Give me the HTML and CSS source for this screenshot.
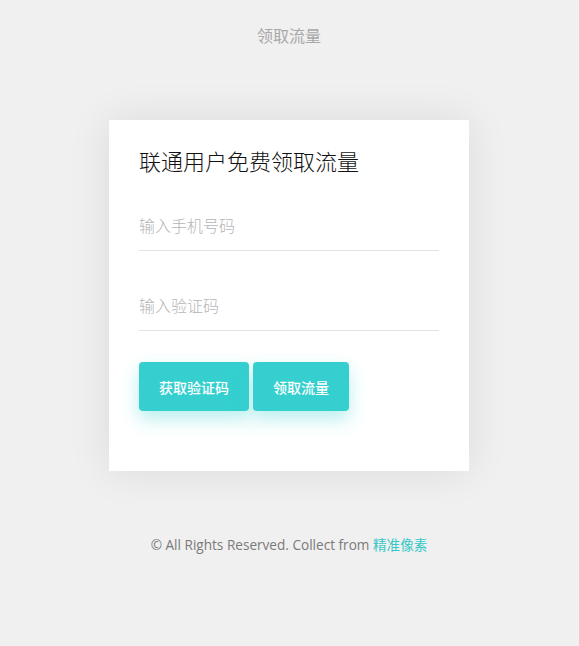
FILE: index.html
```html
<!DOCTYPE html>
<html lang="zh-CN">
<head>
<meta charset="utf-8">
<title>领取流量</title>
<link rel="stylesheet" href="styles.css">
</head>
<body>
<header class="top">领取流量</header>
<main class="card">
  <h1 class="title">联通用户免费领取流量</h1>
  <input class="field" type="text" placeholder="输入手机号码">
  <input class="field field-second" type="text" placeholder="输入验证码">
  <div class="actions">
    <button class="btn btn-code">获取验证码</button>
    <button class="btn btn-get">领取流量</button>
  </div>
</main>
<footer class="foot">© All Rights Reserved. Collect from <a class="foot-link" href="#">精准像素</a></footer>
</body>
</html>
```
FILE: styles.css
```css
html, body {
  margin: 0;
  padding: 0;
}
body {
  background: #f0f0f0;
  font-family: "Noto Sans CJK SC", "Open Sans", sans-serif;
  min-height: 646px;
  padding-right: 1px;
}
.top {
  padding-top: 24px;
  line-height: 22px;
  font-size: 16px;
  color: #a8a8a8;
  text-align: center;
}
.card {
  box-sizing: border-box;
  width: 360px;
  margin: 74px auto 0;
  background: #fff;
  padding: 25px 30px 60px;
  box-shadow: 0 0 40px rgba(0, 0, 0, 0.09);
}
.title {
  margin: 0;
  font-size: 22px;
  font-weight: 300;
  line-height: 30px;
  color: #111;
}
.field {
  display: block;
  box-sizing: border-box;
  width: 300px;
  height: 46px;
  margin: 30px 0 0;
  padding: 0 0 6px;
  border: none;
  border-bottom: 1px solid #e3e3e3;
  outline: none;
  font-family: "Noto Sans CJK SC", sans-serif;
  font-size: 16px;
  font-weight: 300;
  color: #333;
  background: transparent;
}
.field::placeholder {
  color: #b5b5b5;
}
.field-second {
  margin-top: 34px;
}
.actions {
  display: flex;
  gap: 4px;
  margin-top: 31px;
}
.btn {
  height: 49px;
  border: none;
  border-radius: 4px;
  background: #35cfcf;
  color: #fff;
  font-family: "Noto Sans CJK SC", sans-serif;
  font-size: 14px;
  font-weight: 500;
  box-shadow: 0 8px 18px rgba(53, 207, 207, 0.35);
  padding: 0;
  cursor: pointer;
}
.btn-code {
  width: 110px;
}
.btn-get {
  width: 96px;
}
.foot {
  margin-top: 64px;
  line-height: 20px;
  text-align: center;
  font-family: "Open Sans", "Noto Sans CJK SC", sans-serif;
  font-size: 13.6px;
  color: #7a7a7a;
}
.foot-link {
  color: #35c8c8;
  text-decoration: none;
}
```
